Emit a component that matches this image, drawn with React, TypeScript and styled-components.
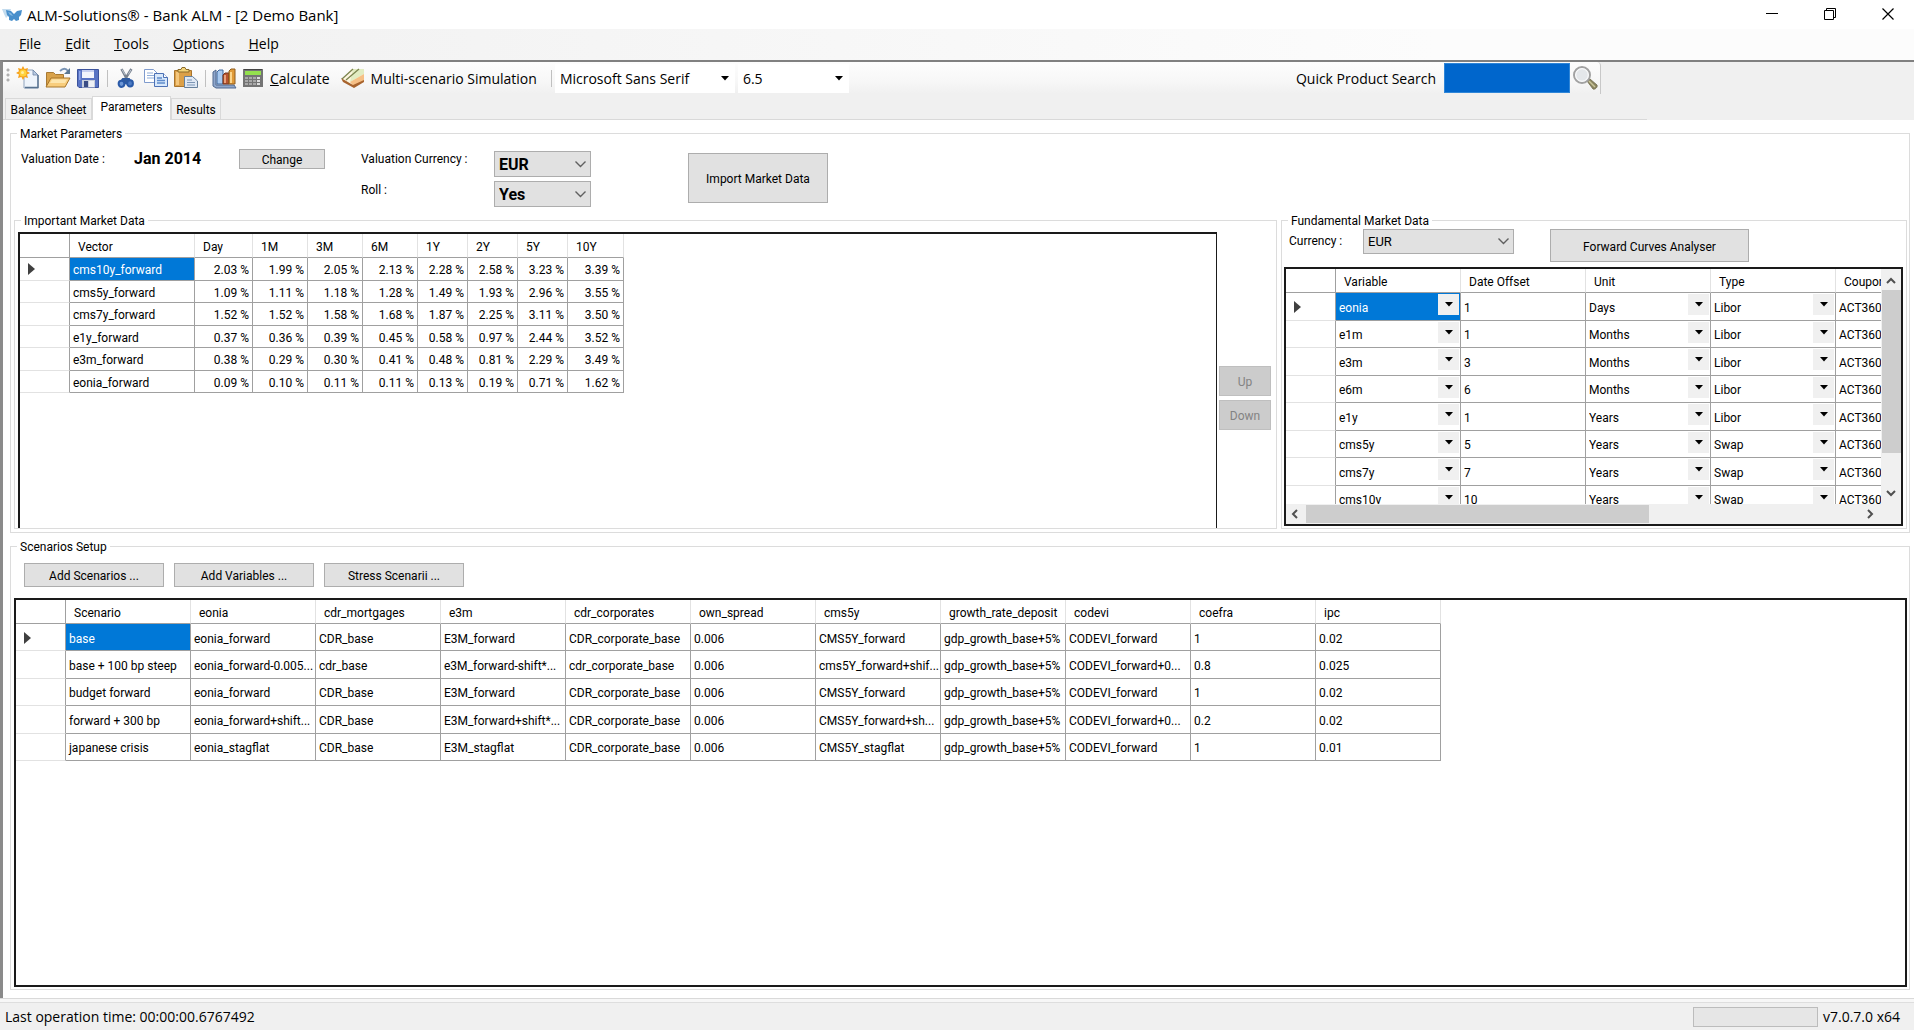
import React from "react";
import styled, { createGlobalStyle, css } from "styled-components";

const UI = `"Open Sans", "Noto Sans", sans-serif`;
const FORM = `Roboto, "Liberation Sans", sans-serif`;

const GlobalStyle = createGlobalStyle`
  *, *::before, *::after { box-sizing: border-box; }
  body { margin: 0; background: #f0f0f0; color: #000; font-family: ${FORM}; font-size: 12px; }
  button, select, input { font: inherit; color: inherit; margin: 0; border-radius: 0; }
  fieldset { margin: 0; min-width: 0; }
`;

/* ---------- window frame ---------- */

const Window = styled.div`
  display: flex;
  flex-direction: column;
  height: 100vh;
  min-height: 820px;
`;

const TitleBar = styled.header`
  display: flex;
  align-items: center;
  height: 29px;
  background: #fff;
  padding-left: 2px;
  font-family: ${UI};
`;

const Title = styled.h1`
  flex: 1;
  margin: 0 0 0 5px;
  font-size: 15px;
  line-height: 20px;
  font-weight: 400;
`;

const CaptionButton = styled.button`
  display: grid;
  place-items: center;
  width: 58px;
  height: 28px;
  padding: 0 0 2px 5px;
  border: 0;
  background: none;
`;

const MenuBar = styled.nav`
  display: flex;
  align-items: center;
  gap: 24px;
  height: 31px;
  padding: 0 0 2px 19px;
  background: linear-gradient(90deg, #f0f0f0, #fcfcfc 75%);
  font-family: ${UI};
  font-size: 14px;
`;

const MenuItem = styled.button`
  padding: 0;
  border: 0;
  background: none;
  line-height: 20px;
`;

const Client = styled.div`
  flex: 1;
  min-height: 0;
  display: flex;
  flex-direction: column;
  border-top: 2px solid #808080;
  border-left: 3px solid #8a8a8a;
`;

/* ---------- tool bar ---------- */

const ToolBar = styled.div`
  display: flex;
  align-items: center;
  align-self: flex-start;
  width: 1598px;
  max-width: 100%;
  height: 32px;
  padding-left: 3px;
  background: linear-gradient(#fdfdfd, #f7f7f7 60%, #f0f0f0);
  border-right: 1px solid #c8c8c8;
  border-radius: 0 4px 0 0;
  font-family: ${UI};
  font-size: 14px;
`;

const Grip = styled.span`
  width: 7px;
  height: 15px;
  margin-bottom: 6px;
  background: radial-gradient(circle at 2px 2px, #b0b0b0 1px, transparent 2px) 0 0 / 7px 5px;
`;

const ToolButton = styled.button<{ $before?: number }>`
  display: flex;
  align-items: center;
  justify-content: center;
  gap: 6px;
  min-width: 30px;
  height: 28px;
  margin-left: ${(p) => p.$before ?? 0}px;
  padding: 0;
  border: 0;
  background: none;
  white-space: nowrap;
`;

const Separator = styled.span<{ $before?: number }>`
  width: 1px;
  height: 17px;
  margin: 0 3px 0 ${(p) => p.$before ?? 4}px;
  background: #c0c0c0;
`;

const FlatCombo = styled.div<{ $width: number }>`
  display: grid;
  grid-template-columns: 1fr 14px;
  align-items: center;
  width: ${(p) => p.$width}px;
  height: 29px;
  margin-right: 3px;
  background: #fff;

  & > select {
    grid-area: 1 / 1 / 2 / 3;
    appearance: none;
    width: 100%;
    height: 29px;
    border: 0;
    padding: 0 0 0 5px;
    background: #fff;
  }
  & > svg { grid-area: 1 / 2; pointer-events: none; }
`;

const SearchLabel = styled.label`
  margin-left: auto;
  white-space: nowrap;
`;

const SearchInput = styled.input`
  width: 126px;
  height: 30px;
  margin: 0 0 0 8px;
  border: 1px solid #2f86d8;
  background: #0066cc;
  color: #fff;
`;

/* ---------- tabs ---------- */

const TabStrip = styled.div`
  display: flex;
  align-items: flex-end;
  height: 26px;
  width: 1644px;
  max-width: 100%;
  padding-left: 2px;
  border-bottom: 1px solid #d9d9d9;
`;

const Tab = styled.button<{ $active?: boolean; $width: number }>`
  width: ${(p) => p.$width}px;
  height: ${(p) => (p.$active ? 24 : 21)}px;
  margin-bottom: ${(p) => (p.$active ? -1 : 0)}px;
  padding: ${(p) => (p.$active ? "0 0 3px" : "2px 0 0")};
  border: 1px solid #d9d9d9;
  border-bottom: 0;
  background: ${(p) => (p.$active ? "#fff" : "#f0f0f0")};
  white-space: nowrap;
`;

const TabPanel = styled.main`
  flex: 1;
  min-height: 0;
  display: flex;
  flex-direction: column;
  gap: 6px;
  padding: 6px 4px 8px 7px;
  background: #fff;
`;

/* ---------- group boxes ---------- */

const Group = styled.fieldset<{ $pad?: string; $width?: number; $grow?: boolean }>`
  display: flex;
  flex-direction: column;
  border: 1px solid #dcdcdc;
  padding: ${(p) => p.$pad ?? "0"};
  ${(p) => p.$width && css`width: ${p.$width}px; flex: none;`}
  ${(p) => p.$grow && css`flex: 1;`}
`;

const Legend = styled.legend<{ $outer?: boolean }>`
  margin-left: ${(p) => (p.$outer ? 3 : 6)}px;
  padding: 2px 3px 0;
  line-height: 13px;
`;

const Parameters = styled.div`
  display: grid;
  grid-template-columns: 113px 105px 122px 133px 194px 140px;
  grid-template-rows: 28px 26px;
  row-gap: 4px;
  padding: 8px 0 6px 7px;
`;

const FieldLabel = styled.label<{ $column?: number }>`
  ${(p) => p.$column && css`grid-column: ${p.$column};`}
  line-height: ${(p) => (p.$column ? 18 : 20)}px;
  white-space: nowrap;
`;

const DateValue = styled.output`
  font-size: 16px;
  font-weight: 700;
  line-height: 20px;
`;

const Button = styled.button<{ $width: number; $height: number }>`
  width: ${(p) => p.$width}px;
  height: ${(p) => p.$height}px;
  padding: 2px 0 0;
  border: 1px solid #adadad;
  background: #e1e1e1;
  line-height: 14px;
  white-space: nowrap;

  &:disabled { background: #cccccc; border-color: #bfbfbf; color: #838383; }
`;

const ImportButton = styled(Button)`
  grid-area: 1 / 6 / 3 / 7;
  align-self: center;
`;

const DropDown = styled.div<{ $width: number; $bold?: boolean }>`
  display: grid;
  grid-template-columns: 1fr 22px;
  align-items: center;
  align-self: ${(p) => (p.$bold ? "end" : "start")};
  width: ${(p) => p.$width}px;

  & > select {
    grid-area: 1 / 1 / 2 / 3;
    appearance: none;
    width: 100%;
    height: ${(p) => (p.$bold ? 26 : 25)}px;
    padding: 0 0 0 4px;
    border: 1px solid #adadad;
    background: #e1e1e1;
    font-size: ${(p) => (p.$bold ? 16 : 13)}px;
    font-weight: ${(p) => (p.$bold ? 700 : 400)};
  }
  & > svg { grid-area: 1 / 2; justify-self: center; pointer-events: none; }
`;

const MarketRow = styled.div`
  flex: 1;
  display: flex;
  gap: 4px;
`;

const VectorArea = styled.div`
  flex: 1;
  display: flex;
  gap: 2px;
  padding: 4px 5px 0 3px;
`;

const OrderButtons = styled.div`
  display: flex;
  flex-direction: column;
  gap: 4px;
  padding-top: 134px;
`;

const CurveHeader = styled.div`
  display: flex;
  align-items: flex-start;
  height: 39px;
  padding: 1px 0 0 7px;

  & > label { width: 74px; line-height: 24px; }
  & > button { margin-left: 36px; }
`;

const ButtonRow = styled.div`
  display: flex;
  gap: 10px;
  padding: 9px 0 11px 10px;
`;

/* ---------- grids ---------- */

const GridBox = styled.div<{ $open?: boolean }>`
  flex: 1;
  min-width: 0;
  border: 2px solid #1a1a1a;
  ${(p) => p.$open && css`border-width: 2px 1px 0 2px;`}
  background: #fff;
  overflow: hidden;
`;

const ScrollBox = styled.div`
  display: grid;
  grid-template-columns: 1fr 20px;
  grid-template-rows: 1fr 20px;
  height: 259px;
  margin: 0 3px 0 2px;
  border: 2px solid #1a1a1a;
  background: #f0f0f0;
`;

const Viewport = styled.div`
  min-width: 0;
  min-height: 0;
  overflow: hidden;
  background: #fff;
`;

const Table = styled.table<{ $width: number; $height: number }>`
  table-layout: fixed;
  border-collapse: separate;
  border-spacing: 0;
  width: ${(p) => p.$width}px;
  height: ${(p) => p.$height}px;
`;

const ColHead = styled.th`
  height: 24px;
  padding: 2px 0 0 8px;
  border-right: 1px solid #e2e2e2;
  border-bottom: 1px solid #a0a0a0;
  text-align: left;
  font-weight: 400;
  white-space: nowrap;

  &:first-child { border-right-color: #a0a0a0; }
`;

const RowHead = styled.th`
  padding: 1px 0 0 8px;
  border-right: 1px solid #a0a0a0;
  border-bottom: 1px solid #e2e2e2;
  text-align: left;

  & > svg { display: block; }
`;

const Cell = styled.td<{ $selected?: boolean; $numeric?: boolean; $combo?: boolean }>`
  padding: ${(p) => (p.$combo ? "0" : p.$numeric ? "3px 3px 0 0" : "3px 0 0 3px")};
  border-right: 1px solid #a0a0a0;
  border-bottom: 1px solid #a0a0a0;
  background: ${(p) => (p.$selected ? "#0078d7" : "#fff")};
  color: ${(p) => (p.$selected ? "#fff" : "#000")};
  text-align: ${(p) => (p.$numeric ? "right" : "left")};
  white-space: nowrap;
  overflow: hidden;
`;

const CellCombo = styled.div`
  display: grid;
  grid-template-columns: 1fr 22px;
  height: 26px;

  & > select {
    grid-area: 1 / 1 / 2 / 3;
    appearance: none;
    width: 100%;
    padding: 3px 0 0 3px;
    border: 0;
    background: transparent;
  }
  & > span {
    grid-area: 1 / 2;
    display: grid;
    place-items: center;
    height: 21px;
    margin: 1px 1px 0 0;
    background: #f0f0f0;
    pointer-events: none;
  }
`;

const VScroll = styled.div`
  display: flex;
  flex-direction: column;
  align-items: center;
  justify-content: space-between;
  padding: 7px 0 6px;
`;

const HScroll = styled.div`
  display: flex;
  align-items: center;
  padding: 0 6px 0 4px;
`;

const Thumb = styled.span<{ $vertical?: boolean }>`
  flex: none;
  width: ${(p) => (p.$vertical ? "19px" : "343px")};
  height: ${(p) => (p.$vertical ? "163px" : "18px")};
  margin: ${(p) => (p.$vertical ? "4px 0 auto" : "0 auto 0 6px")};
  background: #cdcdcd;
`;

/* ---------- status bar ---------- */

const StatusBar = styled.footer`
  display: flex;
  align-items: center;
  height: 32px;
  padding: 4px 14px 0 5px;
  border-top: 1px solid #d9d9d9;
  box-shadow: inset 0 3px 0 #f7f7f7, inset 0 4px 0 #dedede;
  font-family: ${UI};
  font-size: 14px;
`;

const Progress = styled.div`
  width: 125px;
  height: 20px;
  margin: 0 5px 0 auto;
  border: 1px solid #bcbcbc;
  background: #e6e6e6;
`;

/* ---------- drawings ---------- */

const Triangle = ({ size = 8 }: { size?: number }) => (
  <svg width={size} height="5" viewBox="0 0 8 5" aria-hidden="true"><path d="M0 0h8L4 4.6z" fill="#000" /></svg>
);

const Chevron = () => (
  <svg width="13" height="9" viewBox="0 0 13 9" aria-hidden="true">
    <path d="M1.5 1.5l5 5 5-5" fill="none" stroke="#606060" strokeWidth="1.4" />
  </svg>
);

const turns = { up: 180, down: 0, left: 90, right: -90 };
const ScrollArrow = ({ to }: { to: keyof typeof turns }) => (
  <svg width="10" height="10" viewBox="0 0 10 10" aria-hidden="true">
    <path d="M1 3l4 4 4-4" fill="none" stroke="#505050" strokeWidth="2" transform={`rotate(${turns[to]} 5 5)`} />
  </svg>
);

const RowMarker = () => (
  <svg width="7" height="12" viewBox="0 0 7 12" aria-hidden="true"><path d="M0 0l7 6-7 6z" fill="#404040" /></svg>
);

const Butterfly = () => (
  <svg width="20" height="14" viewBox="0 0 20 14" aria-hidden="true">
    <path d="M0 1h9l-2 6-3 3-2-4z" fill="#c3dcef" />
    <path d="M4 2l5 1 3 3 3-3 5-1-1 5-2 2 0 3-3 1-2-2-2 2-3-1 0-3-2-2z" fill="#4a90cc" />
    <path d="M6 4l3 1 2 3-3-1z" fill="#86b8e0" />
  </svg>
);

const NewIcon = () => (
  <svg width="24" height="24" viewBox="0 0 24 24" aria-hidden="true">
    <path d="M8 4h9l5 5v13H8z" fill="#eef4fb" stroke="#8fa3bd" />
    <path d="M9 21.5h13V9" fill="none" stroke="#56718f" strokeWidth="1.4" />
    <path d="M17 4v5h5z" fill="#b9cce4" stroke="#6f87a6" strokeWidth=".8" />
    <path d="M7 0l1.600 3L12 2l-1 3.300L14 7l-3 1.600L12 12l-3.400-1L7 14l-1.600-3L2 12l1-3.400L0 7l3-1.700L2 2l3.400 1z" fill="#f7a11b" />
    <circle cx="7" cy="7" r="3.600" fill="#ffd23c" /><circle cx="6.500" cy="6.500" r="1.500" fill="#fff0a0" />
  </svg>
);

const OpenIcon = () => (
  <svg width="26" height="24" viewBox="0 0 26 24" aria-hidden="true">
    <path d="M1.500 6.500h7l2 2h8v12h-17z" fill="#d9a24a" stroke="#a87a34" />
    <path d="M6 12h19l-5 9H1z" fill="#f8cd7c" stroke="#a8762a" />
    <path d="M7 13.500h15l-2 3.500H5z" fill="#fde6ae" />
    <path d="M15 5c3-3 6-3 8 0" fill="none" stroke="#7893b4" strokeWidth="1.800" />
    <path d="M25 2v6h-6z" fill="#5b7893" />
  </svg>
);

const SaveIcon = () => (
  <svg width="24" height="24" viewBox="0 0 24 24" aria-hidden="true">
    <path d="M1.500 3.500h21v18H3l-1.500-1.500z" fill="#5873c4" stroke="#3c539c" />
    <path d="M6 4h12v8H6z" fill="#f3f5fc" /><path d="M6 4h12v2H6z" fill="#c6cff0" />
    <path d="M3 5h1.500v9H3z" fill="#8fa5e8" />
    <path d="M6 14h13v7.500H6z" fill="#c9cfdc" /><path d="M8 15h4v6H8z" fill="#3a4c85" /><path d="M13 15h5v6h-5z" fill="#eef0f5" />
  </svg>
);

const CutIcon = () => (
  <svg width="18" height="22" viewBox="0 0 20 24" aria-hidden="true">
    <path d="M5 2l7 13M16 2L8 15" stroke="#77818e" strokeWidth="2.800" />
    <path d="M5.500 2.500l3.500 6M15.500 3l-3 5" stroke="#c5cdd6" />
    <path d="M6 12h8l2 4-3 3H7l-4-3z" fill="#2f5b9f" />
    <ellipse cx="5" cy="18.500" rx="3.200" ry="3.400" fill="#6d97d6" stroke="#2a5aa8" strokeWidth="2.200" />
    <ellipse cx="14.500" cy="18" rx="3.200" ry="3.400" fill="#4e7cc4" stroke="#2a5aa8" strokeWidth="2.200" />
  </svg>
);

const CopyIcon = () => (
  <svg width="26" height="24" viewBox="0 0 26 24" aria-hidden="true">
    <path d="M1.500 3.500h9l4 4v9h-13z" fill="#fff" stroke="#7f9bcd" />
    <path d="M4 7h6M4 9.500h8M4 12h8" stroke="#8fadd9" strokeWidth="1.200" />
    <path d="M11.500 7.500h9l4 4v9h-13z" fill="#d8e8fb" stroke="#4c71b5" />
    <path d="M20.500 7.500v4h4" fill="#fff" stroke="#4c71b5" />
    <path d="M14 12h5M14 14.500h8M14 17h8" stroke="#5f8ccc" strokeWidth="1.300" />
  </svg>
);

const PasteIcon = () => (
  <svg width="26" height="24" viewBox="0 0 26 24" aria-hidden="true">
    <path d="M1.500 4.500h17v16h-17z" fill="#dca048" stroke="#a8742c" />
    <path d="M3 6h3v13H3z" fill="#f3c67c" />
    <path d="M5 6V3.500h3L9 1.500h3l1 2h3V6z" fill="#f3d377" stroke="#8a6a2a" />
    <path d="M11.500 10.500h8l5 4.500v6.500h-13z" fill="#dfe8f4" stroke="#66809c" />
    <path d="M14 14h5M14 16.500h8M14 19h8" stroke="#7d96b5" strokeWidth="1.200" />
  </svg>
);

const ChartIcon = () => (
  <svg width="26" height="24" viewBox="0 0 26 24" aria-hidden="true">
    <path d="M2 6v14l3 2h20l-2-3H5V4z" fill="#8ea6cb" stroke="#50698f" />
    <path d="M6 6l2-2h4v14H6z" fill="#a9caf0" stroke="#3f689f" />
    <path d="M12 9l2-2h4v11h-6z" fill="#b8532f" stroke="#74361f" /><path d="M13 9h2v8h-2z" fill="#e8a07a" />
    <path d="M18 5l2-2h4v15h-6z" fill="#e09a38" stroke="#8e5c1e" /><path d="M19 6h2v11h-2z" fill="#fbd58c" />
  </svg>
);

const CalculatorIcon = () => (
  <svg width="22" height="24" viewBox="0 0 22 24" aria-hidden="true">
    <path d="M1 3h20v18H1z" fill="#747474" /><path d="M2 3h18v1H2z" fill="#444" />
    <path d="M3 5h16v4H3z" fill="#94e04e" />
    {[11, 14, 17].map((y) => [3, 7, 11, 15].map((x) => <rect key={`${x}-${y}`} x={x} y={y} width="3" height="2" fill={x === 15 ? "#dcdcdc" : "#a9a9a9"} />))}
  </svg>
);

const SimulationIcon = () => (
  <svg width="24" height="24" viewBox="0 0 24 24" aria-hidden="true">
    <path d="M1 14L10 3h13v7l-12 8z" fill="#fdf6df" />
    <path d="M12 3h11v5L9 16z" fill="#e2ecc2" />
    <path d="M9 16l14-8v7l-10 6z" fill="#f6bf85" />
    <path d="M0 12l12 7 11-5v2l-10 6L2 16z" fill="#a8642e" />
    <path d="M1 13L12 3M5 14L18 3" stroke="#7c8550" strokeWidth="1.300" />
  </svg>
);

const MagnifierIcon = () => (
  <svg width="26" height="26" viewBox="0 0 26 26" aria-hidden="true">
    <path d="M15 16l3-2 7 6c1 2-2 5-4 4z" fill="#8a8560" stroke="#6e6a4c" strokeWidth=".8" />
    <path d="M17 16l6 6" stroke="#c9c59a" strokeWidth="1.500" />
    <circle cx="10" cy="10" r="8" fill="#e4e7ea" stroke="#a2a2a2" strokeWidth="2" />
    <circle cx="10" cy="10" r="6.300" fill="none" stroke="#fff" />
  </svg>
);

/* ---------- data ---------- */

const tenors = ["Day", "1M", "3M", "6M", "1Y", "2Y", "5Y", "10Y"];
const vectors: [string, number[]][] = [
  ["cms10y_forward", [2.03, 1.99, 2.05, 2.13, 2.28, 2.58, 3.23, 3.39]],
  ["cms5y_forward", [1.09, 1.11, 1.18, 1.28, 1.49, 1.93, 2.96, 3.55]],
  ["cms7y_forward", [1.52, 1.52, 1.58, 1.68, 1.87, 2.25, 3.11, 3.5]],
  ["e1y_forward", [0.37, 0.36, 0.39, 0.45, 0.58, 0.97, 2.44, 3.52]],
  ["e3m_forward", [0.38, 0.29, 0.3, 0.41, 0.48, 0.81, 2.29, 3.49]],
  ["eonia_forward", [0.09, 0.1, 0.11, 0.11, 0.13, 0.19, 0.71, 1.62]],
];

const curves = [
  ["eonia", "1", "Days", "Libor"],
  ["e1m", "1", "Months", "Libor"],
  ["e3m", "3", "Months", "Libor"],
  ["e6m", "6", "Months", "Libor"],
  ["e1y", "1", "Years", "Libor"],
  ["cms5y", "5", "Years", "Swap"],
  ["cms7y", "7", "Years", "Swap"],
  ["cms10y", "10", "Years", "Swap"],
];

const variables = ["Scenario", "eonia", "cdr_mortgages", "e3m", "cdr_corporates", "own_spread", "cms5y", "growth_rate_deposit", "codevi", "coefra", "ipc"];
const scenarios = [
  ["base", "eonia_forward", "CDR_base", "E3M_forward", "CDR_corporate_base", "0.006", "CMS5Y_forward", "gdp_growth_base+5%", "CODEVI_forward", "1", "0.02"],
  ["base + 100 bp steep", "eonia_forward-0.005...", "cdr_base", "e3M_forward-shift*...", "cdr_corporate_base", "0.006", "cms5Y_forward+shif...", "gdp_growth_base+5%", "CODEVI_forward+0...", "0.8", "0.025"],
  ["budget forward", "eonia_forward", "CDR_base", "E3M_forward", "CDR_corporate_base", "0.006", "CMS5Y_forward", "gdp_growth_base+5%", "CODEVI_forward", "1", "0.02"],
  ["forward + 300 bp", "eonia_forward+shift...", "CDR_base", "E3M_forward+shift*...", "CDR_corporate_base", "0.006", "CMS5Y_forward+sh...", "gdp_growth_base+5%", "CODEVI_forward+0...", "0.2", "0.02"],
  ["japanese crisis", "eonia_stagflat", "CDR_base", "E3M_stagflat", "CDR_corporate_base", "0.006", "CMS5Y_stagflat", "gdp_growth_base+5%", "CODEVI_forward", "1", "0.01"],
];

const Columns = ({ widths }: { widths: number[] }) => (
  <colgroup>{widths.map((w, i) => <col key={i} width={w} />)}</colgroup>
);

const total = (widths: number[]) => widths.reduce((a, b) => a + b, 0);
const vectorWidths = [50, 125, 58, 55, 55, 55, 50, 50, 50, 56];
const curveWidths = [50, 125, 125, 125, 125, 125];
const scenarioWidths = [50, ...variables.map(() => 125)];

const ComboCell = ({ value, label, selected }: { value: string; label: string; selected?: boolean }) => (
  <Cell $combo $selected={selected}>
    <CellCombo>
      <select aria-label={label} defaultValue={value}><option>{value}</option></select>
      <span><Triangle /></span>
    </CellCombo>
  </Cell>
);

const VectorTable = () => (
  <Table $width={total(vectorWidths)} $height={159}>
    <Columns widths={vectorWidths} />
    <thead><tr><ColHead aria-label="Row" />{["Vector", ...tenors].map((t) => <ColHead key={t}>{t}</ColHead>)}</tr></thead>
    <tbody>
      {vectors.map(([name, rates], r) => (
        <tr key={name}>
          <RowHead>{r === 0 && <RowMarker />}</RowHead>
          <Cell $selected={r === 0}>{name}</Cell>
          {rates.map((rate, i) => <Cell key={i} $numeric>{rate.toFixed(2)} %</Cell>)}
        </tr>
      ))}
    </tbody>
  </Table>
);

const CurveTable = () => (
  <Table $width={total(curveWidths)} $height={244}>
    <Columns widths={curveWidths} />
    <thead><tr><ColHead aria-label="Row" />{["Variable", "Date Offset", "Unit", "Type", "Coupon"].map((t) => <ColHead key={t}>{t}</ColHead>)}</tr></thead>
    <tbody>
      {curves.map(([name, offset, unit, type], r) => (
        <tr key={name}>
          <RowHead>{r === 0 && <RowMarker />}</RowHead>
          <ComboCell value={name} label="Variable" selected={r === 0} />
          <Cell>{offset}</Cell>
          <ComboCell value={unit} label="Unit" />
          <ComboCell value={type} label="Type" />
          <Cell>ACT360</Cell>
        </tr>
      ))}
    </tbody>
  </Table>
);

const ScenarioTable = () => (
  <Table $width={total(scenarioWidths)} $height={161}>
    <Columns widths={scenarioWidths} />
    <thead><tr><ColHead aria-label="Row" />{variables.map((t) => <ColHead key={t}>{t}</ColHead>)}</tr></thead>
    <tbody>
      {scenarios.map((row, r) => (
        <tr key={row[0]}>
          <RowHead>{r === 0 && <RowMarker />}</RowHead>
          {row.map((value, i) => <Cell key={i} $selected={r === 0 && i === 0}>{value}</Cell>)}
        </tr>
      ))}
    </tbody>
  </Table>
);

export default function App() {
  return (
    <>
      <GlobalStyle />
      <Window>
        <TitleBar>
          <Butterfly />
          <Title>ALM-Solutions® - Bank ALM - [2 Demo Bank]</Title>
          <CaptionButton aria-label="Minimize"><svg width="12" height="12"><path d="M0 5.500h12" stroke="#000" /></svg></CaptionButton>
          <CaptionButton aria-label="Restore"><svg width="12" height="12"><path d="M.5 2.500h9v9h-9zM2.500 2.500v-2h9v9h-2" fill="none" stroke="#000" /></svg></CaptionButton>
          <CaptionButton aria-label="Close"><svg width="12" height="12"><path d="M.5.5l11 11M11.500.5l-11 11" stroke="#000" strokeWidth="1.200" /></svg></CaptionButton>
        </TitleBar>
        <MenuBar>
          {["File", "Edit", "Tools", "Options", "Help"].map((m) => <MenuItem key={m}><u>{m[0]}</u>{m.slice(1)}</MenuItem>)}
        </MenuBar>
        <Client>
          <ToolBar role="toolbar">
            <Grip />
            <ToolButton aria-label="New"><NewIcon /></ToolButton>
            <ToolButton aria-label="Open"><OpenIcon /></ToolButton>
            <ToolButton aria-label="Save"><SaveIcon /></ToolButton>
            <Separator />
            <ToolButton aria-label="Cut"><CutIcon /></ToolButton>
            <ToolButton aria-label="Copy"><CopyIcon /></ToolButton>
            <ToolButton aria-label="Paste"><PasteIcon /></ToolButton>
            <Separator />
            <ToolButton aria-label="Chart"><ChartIcon /></ToolButton>
            <ToolButton $before={3}><CalculatorIcon /><span><u>C</u>alculate</span></ToolButton>
            <ToolButton $before={11}><SimulationIcon /><span>Multi-scenario Simulation</span></ToolButton>
            <Separator $before={14} />
            <FlatCombo $width={180}>
              <select aria-label="Font" defaultValue="Microsoft Sans Serif"><option>Microsoft Sans Serif</option></select>
              <Triangle />
            </FlatCombo>
            <FlatCombo $width={111}>
              <select aria-label="Font size" defaultValue="6.5"><option>6.5</option></select>
              <Triangle />
            </FlatCombo>
            <SearchLabel htmlFor="search">Quick Product Search</SearchLabel>
            <SearchInput id="search" />
            <ToolButton aria-label="Search"><MagnifierIcon /></ToolButton>
          </ToolBar>
          <TabStrip role="tablist">
            <Tab role="tab" $width={87}>Balance Sheet</Tab>
            <Tab role="tab" aria-selected $active $width={79}>Parameters</Tab>
            <Tab role="tab" $width={50}>Results</Tab>
          </TabStrip>
          <TabPanel>
            <Group $pad="0 2px 3px 3px">
              <Legend $outer>Market Parameters</Legend>
              <Parameters>
                <FieldLabel htmlFor="date">Valuation Date :</FieldLabel>
                <DateValue id="date">Jan 2014</DateValue>
                <Button $width={86} $height={20}>Change</Button>
                <FieldLabel htmlFor="valuation-currency">Valuation Currency :</FieldLabel>
                <DropDown $width={97} $bold>
                  <select id="valuation-currency" defaultValue="EUR"><option>EUR</option></select>
                  <Chevron />
                </DropDown>
                <ImportButton $width={140} $height={50}>Import Market Data</ImportButton>
                <FieldLabel $column={4} htmlFor="roll">Roll :</FieldLabel>
                <DropDown $width={97} $bold>
                  <select id="roll" defaultValue="Yes"><option>Yes</option></select>
                  <Chevron />
                </DropDown>
              </Parameters>
              <MarketRow>
                <Group $grow>
                  <Legend>Important Market Data</Legend>
                  <VectorArea>
                    <GridBox $open><VectorTable /></GridBox>
                    <OrderButtons>
                      <Button $width={52} $height={30} disabled>Up</Button>
                      <Button $width={52} $height={30} disabled>Down</Button>
                    </OrderButtons>
                  </VectorArea>
                </Group>
                <Group $width={626} $pad="0 0 2px">
                  <Legend>Fundamental Market Data</Legend>
                  <CurveHeader>
                    <label htmlFor="curve-currency">Currency :</label>
                    <DropDown $width={151}>
                      <select id="curve-currency" defaultValue="EUR"><option>EUR</option></select>
                      <Chevron />
                    </DropDown>
                    <Button $width={199} $height={33}>Forward Curves Analyser</Button>
                  </CurveHeader>
                  <ScrollBox>
                    <Viewport><CurveTable /></Viewport>
                    <VScroll><ScrollArrow to="up" /><Thumb $vertical /><ScrollArrow to="down" /></VScroll>
                    <HScroll><ScrollArrow to="left" /><Thumb /><ScrollArrow to="right" /></HScroll>
                  </ScrollBox>
                </Group>
              </MarketRow>
            </Group>
            <Group $grow $pad="0 2px 2px 3px">
              <Legend $outer>Scenarios Setup</Legend>
              <ButtonRow>
                <Button $width={140} $height={24}>Add Scenarios ...</Button>
                <Button $width={140} $height={24}>Add Variables ...</Button>
                <Button $width={140} $height={24}>Stress Scenarii ...</Button>
              </ButtonRow>
              <GridBox><ScenarioTable /></GridBox>
            </Group>
          </TabPanel>
        </Client>
        <StatusBar>
          <span>Last operation time: 00:00:00.6767492</span>
          <Progress role="progressbar" aria-label="Progress" />
          <span>v7.0.7.0 x64</span>
        </StatusBar>
      </Window>
    </>
  );
}
